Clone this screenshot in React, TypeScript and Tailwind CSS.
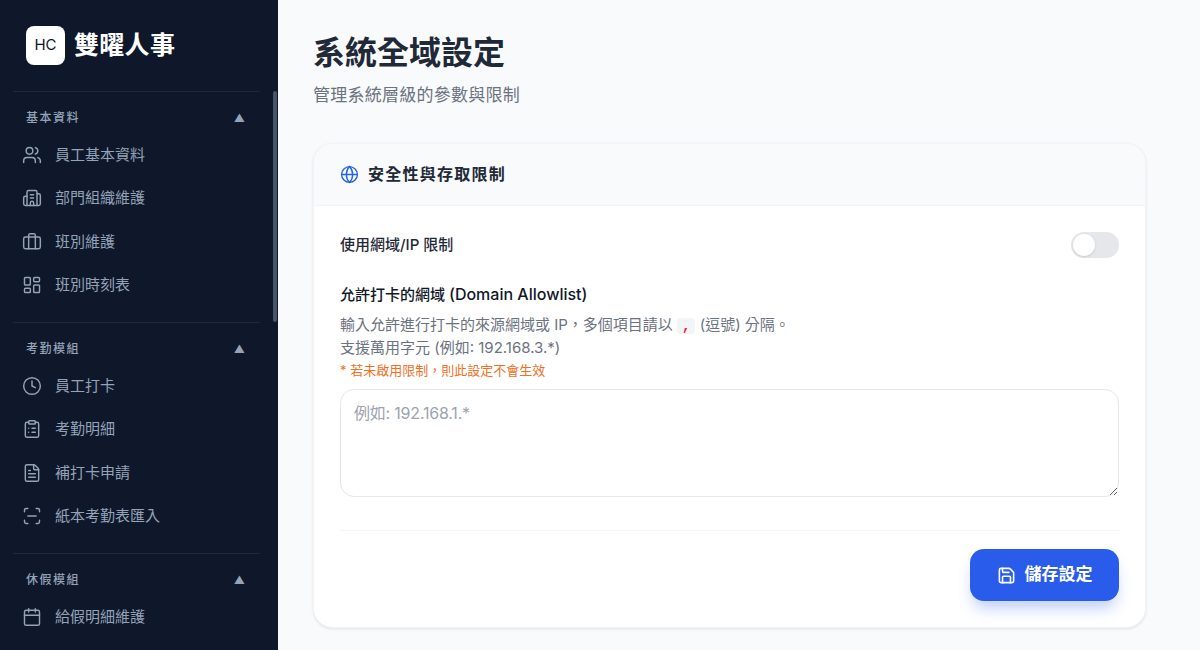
import React from "react";
import { Users, Building2, Briefcase, LayoutDashboard, Clock, ClipboardList, FileText, ScanLine, Calendar, Globe, Save } from "lucide-react";

const sections = [
  { title: "基本資料", items: [
    { label: "員工基本資料", Icon: Users },
    { label: "部門組織維護", Icon: Building2 },
    { label: "班別維護", Icon: Briefcase },
    { label: "班別時刻表", Icon: LayoutDashboard },
  ]},
  { title: "考勤模組", items: [
    { label: "員工打卡", Icon: Clock },
    { label: "考勤明細", Icon: ClipboardList },
    { label: "補打卡申請", Icon: FileText },
    { label: "紙本考勤表匯入", Icon: ScanLine },
  ]},
  { title: "休假模組", items: [
    { label: "給假明細維護", Icon: Calendar },
  ]},
];

export default function App() {
  return (
    <div className="flex h-[650px] w-[1200px] overflow-hidden bg-[#f9fafb] font-['Inter','Noto_Sans_CJK_TC',sans-serif]">
      <aside className="relative flex w-[278px] shrink-0 flex-col overflow-hidden bg-[#0f172a]">
        <div className="flex h-[91px] shrink-0 items-center gap-[9px] pl-[26px] pb-[1px]">
          <div className="flex h-[39px] w-[39px] items-center justify-center rounded-[8px] bg-white text-[15px] text-[#0f172a]">HC</div>
          <div className="text-[25px] font-semibold leading-none tracking-[0.3px] text-white">雙曜人事</div>
        </div>
        <nav className="flex flex-col">
          {sections.map((s) => (
            <div key={s.title} className="mx-[13px] w-[247px] border-t border-[#1e293b] pt-[16px] pb-[15px]">
              <div className="flex h-[20px] items-center justify-between pl-[13px] pr-[15px] text-[12px] font-medium tracking-[1.5px] text-[#94a3b8]">
                <span>{s.title}</span>
                <span className="text-[11px] leading-none tracking-normal">▲</span>
              </div>
              <div className="mt-[5px] flex flex-col">
                {s.items.map(({ label, Icon }) => (
                  <div key={label} className="flex h-[43.5px] items-center gap-[13px] pl-[9px] text-[15px] text-[#94a3b8]">
                    <Icon size={20} strokeWidth={1.75} className="shrink-0" />
                    <span>{label}</span>
                  </div>
                ))}
              </div>
            </div>
          ))}
        </nav>
        <div className="absolute right-[1px] top-[91px] h-[231px] w-[4px] rounded-full bg-[#475569]" />
      </aside>
      <main className="min-w-0 flex-1 px-[35px] pt-[31px]">
        <h1 className="text-[32px] font-semibold leading-[44px] text-[#1f2937]">系統全域設定</h1>
        <p className="mt-[8px] text-[17px] leading-[24px] tracking-[0.25px] text-[#6b7280]">管理系統層級的參數與限制</p>
        <section className="mt-[36px] w-[833px] overflow-hidden rounded-[20px] border border-[#f1f5f9] bg-white shadow-[0_1px_3px_rgba(0,0,0,0.1)]">
          <header className="flex h-[62px] items-center gap-[9px] border-b border-[#f1f5f9] bg-[#f9fafb] pl-[26px] pb-[1px]">
            <Globe size={19} strokeWidth={1.75} className="text-[#2563eb]" />
            <h2 className="text-[16px] font-semibold tracking-[1.25px] text-[#1f2937]">安全性與存取限制</h2>
          </header>
          <div className="px-[26px] pt-[26px] pb-[26px]">
            <div className="flex h-[26px] items-center justify-between">
              <span className="text-[15px] font-medium text-[#1f2937]">使用網域/IP 限制</span>
              <div className="flex h-[26px] w-[48px] items-center rounded-full bg-[#e5e7eb] px-[2px]">
                <div className="h-[22px] w-[22px] rounded-full bg-white shadow-sm" />
              </div>
            </div>
            <h3 className="mt-[25px] text-[15px] font-medium leading-[22px] text-[#111827]">允許打卡的網域 <span className="text-[16px]">(Domain Allowlist)</span></h3>
            <p className="mt-[8px] text-[15px] leading-[22.5px] text-[#6b7280]">
              輸入允許進行打卡的來源網域或 IP，多個項目請以 <code className="rounded bg-[#f3f4f6] px-[5px] text-[14px] leading-none font-bold text-[#e11d48]">,</code> (逗號) 分隔。
              <br />
              支援萬用字元 (例如: 192.168.3.*)
            </p>
            <p className="mt-[2px] text-[13px] leading-[18px] text-[#f0701f]">* 若未啟用限制，則此設定不會生效</p>
            <textarea
              placeholder="例如: 192.168.1.*"
              className="mt-[10px] block h-[108px] w-full rounded-[14px] border border-[#e5e7eb] px-[13px] py-[11px] text-[16px] leading-[24px] tracking-[-0.2px] outline-none placeholder:text-[#9ca3af]"
            />
            <div className="mt-[33px] flex justify-end border-t border-[#f3f4f6] pt-[18px]">
              <button className="flex h-[52px] w-[149px] items-center justify-center gap-[9px] rounded-[14px] bg-[#2a5cec] text-[17px] font-semibold text-white shadow-[0_10px_15px_-3px_rgba(37,99,235,0.3)]">
                <Save size={19} strokeWidth={2} />
                儲存設定
              </button>
            </div>
          </div>
        </section>
      </main>
    </div>
  );
}
